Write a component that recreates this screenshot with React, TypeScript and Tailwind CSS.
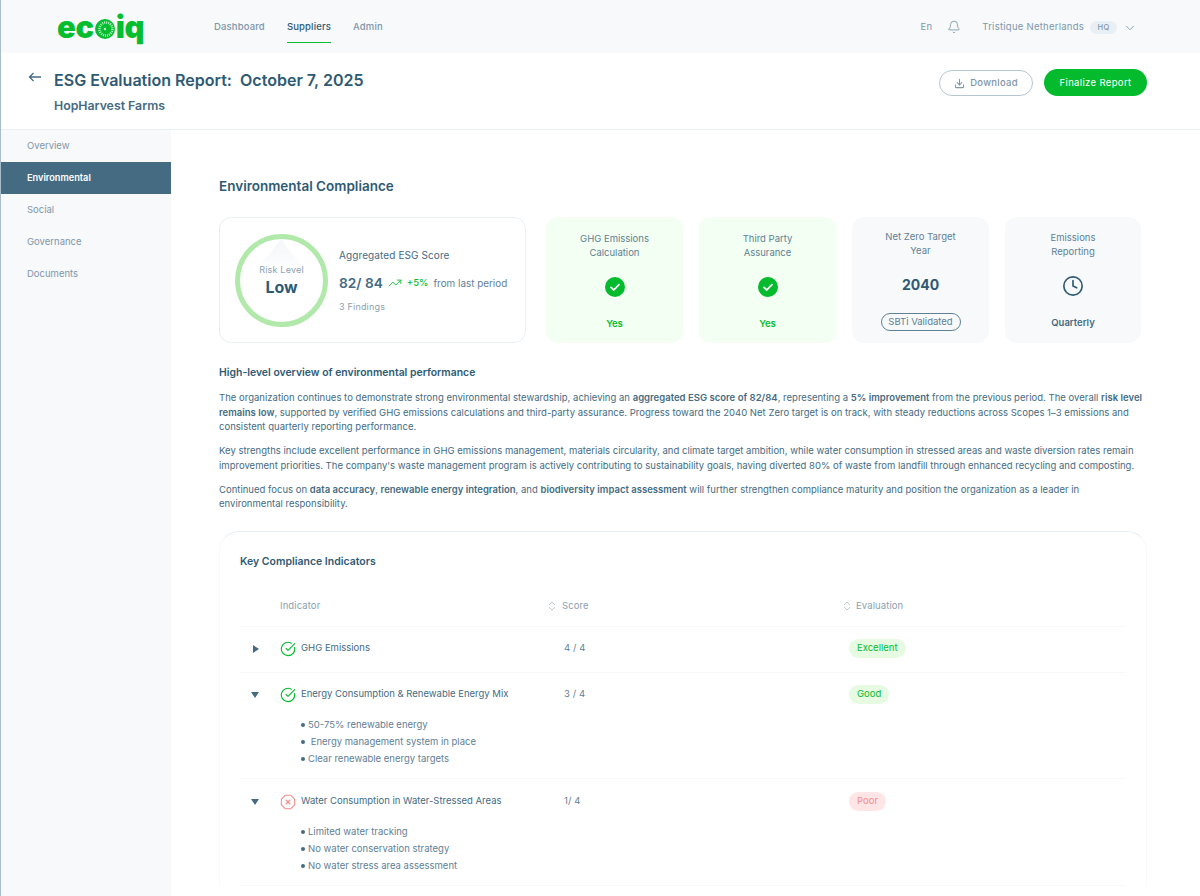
import {
  Bell,
  ChevronDown,
  ChevronsUpDown,
  CircleCheckBig,
  Clock,
  Download,
  OctagonX,
  TrendingUp,
} from "lucide-react";

const sideItems = ["Overview", "Environmental", "Social", "Governance", "Documents"];

function Logo() {
  return (
    <div className="flex items-center text-[31px] leading-none font-black tracking-[-0.4px] text-[#06bd30]">
      <span>ec</span>
      <svg width="20" height="20" viewBox="0 0 20 20" className="mt-[5px] ml-[1px]">
        <circle cx="10" cy="10" r="10" fill="#06bd30" />
        <circle cx="11" cy="10" r="6.5" fill="none" stroke="#b9efc5" strokeWidth="2.5" strokeDasharray="1 1" />
        <circle cx="10" cy="10" r="3.4" fill="#06bd30" />
        <circle cx="10" cy="10" r="1.2" fill="#bdf0c8" />
      </svg>
      <span className="ml-[1px]">iq</span>
    </div>
  );
}

function Header() {
  return (
    <header className="flex h-[53px] items-center bg-[#f7f9fb] pr-[63px] pl-[56px]">
      <div className="w-[157px]">
        <Logo />
      </div>
      <nav className="flex h-full items-center gap-[22px] pt-[2px] text-[9.5px] font-medium tracking-[0.15px] text-[#7f97a8]">
        <a>Dashboard</a>
        <a className="relative flex h-full items-center text-[#2f5a73]">
          Suppliers
          <span className="absolute right-0 bottom-[10px] left-0 h-[1.5px] bg-[#06bd30]" />
        </a>
        <a>Admin</a>
      </nav>
      <div className="ml-auto flex items-center pt-[2px] text-[9.5px] tracking-[0.25px] text-[#7f97a8]">
        <span>En</span>
        <Bell size={14} strokeWidth={1.5} className="mr-[21px] -mt-[2px] ml-[15px]" />
        <span>Tristique Netherlands</span>
        <span className="ml-[6px] flex h-[13px] w-[27px] items-center justify-center rounded-full bg-[#e8eff5] text-[7.5px] font-medium">
          HQ
        </span>
        <ChevronDown size={14} strokeWidth={1.5} className="ml-[6px]" />
      </div>
    </header>
  );
}

function TitleBar() {
  return (
    <div className="flex h-[77px] border-b border-[#e8eff5] bg-white pt-[16px] pr-[53px] pl-[27px]">
      <svg width="14" height="10" viewBox="0 0 14 10" className="mt-[3px] text-[#456b82]">
        <path d="M1.5 5H13M5.5 1 1.5 5l4 4" fill="none" stroke="currentColor" strokeWidth="1.3" />
      </svg>
      <div className="ml-[12px]">
        <h1 className="text-[16.05px] leading-[22px] font-semibold text-[#2f5a73]">
          ESG Evaluation Report:&nbsp; October 7, 2025
        </h1>
        <h2 className="mt-[7px] text-[12.3px] leading-[16px] font-semibold text-[#456b82]">
          HopHarvest Farms
        </h2>
      </div>
      <div className="ml-auto flex h-[27px] items-center gap-[11px]">
        <button className="flex h-[26px] w-[94px] items-center justify-center gap-[5px] rounded-full border border-[#b6c6d2] pt-[1px] text-[9.5px] font-medium tracking-[0.25px] text-[#7f97a8]">
          <Download size={11} strokeWidth={2.2} />
          Download
        </button>
        <button className="h-[27px] w-[103px] rounded-full bg-[#04bb2e] pt-[1px] text-[9.5px] tracking-[0.35px] text-white">
          Finalize Report
        </button>
      </div>
    </div>
  );
}

function Sidebar() {
  return (
    <aside className="w-[170px] shrink-0 bg-[#f7f9fb]">
      {sideItems.map((item) => (
        <div
          key={item}
          className={
            item === "Environmental"
              ? "flex h-[32px] items-center bg-[#456b82] pl-[26px] text-[9.2px] font-semibold text-white"
              : "flex h-[32px] items-center pl-[26px] text-[9.5px] text-[#7f97a8]"
          }
        >
          {item}
        </div>
      ))}
    </aside>
  );
}

function ScoreCard() {
  return (
    <div className="flex h-[126px] w-[307px] items-center rounded-xl border border-[#e8eff5] pl-[15px]">
      <div className="relative flex h-[93px] w-[93px] shrink-0 flex-col items-center justify-center rounded-full border-[5px] border-[#b1e9ab]">
        <svg width="40" height="26" viewBox="0 0 40 26" className="absolute top-0 left-[21px]">
          <defs>
            <linearGradient id="gauge" x1="0" y1="0" x2="0" y2="1">
              <stop offset="0" stopColor="#f4f6f9" />
              <stop offset="1" stopColor="#fbfcfd" />
            </linearGradient>
          </defs>
          <polygon points="20,0 40,26 0,26" fill="url(#gauge)" />
        </svg>
        <span className="relative mt-[1px] text-[9px] leading-[12px] tracking-[0.2px] text-[#8ba1b1]">Risk Level</span>
        <span className="relative mt-[1px] text-[16px] leading-[20px] font-bold text-[#2f5a73]">Low</span>
      </div>
      <div className="mt-[1px] ml-[11px]">
        <div className="text-[10px] leading-[14px] tracking-[0.1px] text-[#456b82]">Aggregated ESG Score</div>
        <div className="mt-[12px] flex items-center">
          <span className="text-[13.7px] leading-[18px] font-semibold text-[#456b82]">82/ 84</span>
          <TrendingUp size={14} strokeWidth={1.5} className="ml-[5px] text-[#06bd30]" />
          <span className="ml-[5px] text-[9.5px] font-medium text-[#06bd30]">+5%</span>
          <span className="ml-[5px] text-[9.9px] text-[#5f8095]">from last period</span>
        </div>
        <div className="mt-[9px] text-[9px] leading-[12px] tracking-[0.2px] text-[#8ba1b1]">3 Findings</div>
      </div>
    </div>
  );
}

function CheckDisc() {
  return (
    <svg width="20" height="20" viewBox="0 0 20 20">
      <circle cx="10" cy="10" r="10" fill="#04bb2e" />
      <path d="M6 10.4 8.8 13 14 7.6" fill="none" stroke="#fff" strokeWidth="1.8" strokeLinecap="round" strokeLinejoin="round" />
    </svg>
  );
}

function GreenCard({ title }: { title: string[] }) {
  return (
    <div className="flex h-[126px] w-[137px] flex-col items-center rounded-xl bg-[#f3fff2] pt-[15px]">
      <div className="text-center text-[9.5px] leading-[14px] text-[#5f8095]">
        {title[0]}
        <br />
        {title[1]}
      </div>
      <div className="mt-[17px]">
        <CheckDisc />
      </div>
      <div className="mt-[20px] text-[9.5px] font-semibold text-[#04bb2e]">Yes</div>
    </div>
  );
}

function CardRow() {
  return (
    <div className="mt-[22px] flex">
      <ScoreCard />
      <div className="ml-[20px] flex gap-[16px]">
        <GreenCard title={["GHG Emissions", "Calculation"]} />
        <GreenCard title={["Third Party", "Assurance"]} />
        <div className="flex h-[126px] w-[137px] flex-col items-center rounded-xl bg-[#f7f9fb] pt-[13px]">
          <div className="text-center text-[9.5px] leading-[14px] text-[#5f8095]">
            Net Zero Target
            <br />
            Year
          </div>
          <div className="mt-[18px] text-[14px] leading-[18px] font-bold text-[#2f5a73]">2040</div>
          <div className="mt-[19px] flex h-[18px] w-[80px] items-center justify-center rounded-full border border-[#5f8095] text-[9.5px] text-[#5f8095]">
            SBTi Validated
          </div>
        </div>
        <div className="flex h-[126px] w-[136px] flex-col items-center rounded-xl bg-[#f7f9fb] pt-[14px]">
          <div className="text-center text-[9.5px] leading-[14px] text-[#5f8095]">
            Emissions
            <br />
            Reporting
          </div>
          <Clock size={22} strokeWidth={1.8} className="mt-[16px] text-[#2f5a73]" />
          <div className="mt-[19px] text-[9.5px] font-semibold text-[#456b82]">Quarterly</div>
        </div>
      </div>
    </div>
  );
}

function Overview() {
  return (
    <section className="mt-[23px] w-[928px] text-[9.5px] leading-[14.5px] tracking-[0.015px] text-[#456b82]">
      <h3 className="text-[10.4px] leading-[14px] font-semibold text-[#2f5a73]">
        High-level overview of environmental performance
      </h3>
      <p className="mt-[11px]">
        The organization continues to demonstrate strong environmental stewardship, achieving an{" "}
        <b className="font-semibold">aggregated ESG score of 82/84</b>, representing a{" "}
        <b className="font-semibold">5% improvement</b> from the previous period. The overall{" "}
        <b className="font-semibold">risk level remains low</b>, supported by verified GHG emissions
        calculations and third-party assurance. Progress toward the 2040 Net Zero target is on track, with
        steady reductions across Scopes 1–3 emissions and consistent quarterly reporting performance.
      </p>
      <p className="mt-[9.5px]">
        Key strengths include excellent performance in GHG emissions management, materials circularity, and
        climate target ambition, while water consumption in stressed areas and waste diversion rates remain
        improvement priorities. The company's waste management program is actively contributing to
        sustainability goals, having diverted 80% of waste from landfill through enhanced recycling and
        composting.
      </p>
      <p className="mt-[9.5px]">
        Continued focus on <b className="font-semibold">data accuracy</b>,{" "}
        <b className="font-semibold">renewable energy integration</b>, and{" "}
        <b className="font-semibold">biodiversity impact assessment</b> will further strengthen compliance
        maturity and position the organization as a leader in
        <br />
        environmental responsibility.
      </p>
    </section>
  );
}

function Caret({ open }: { open: boolean }) {
  return (
    <svg width="8" height="8" viewBox="0 0 8 8" className="ml-[11px]">
      <polygon points={open ? "0,1 8,1 4,7" : "2,0 8,4 2,8"} fill="#456b82" />
    </svg>
  );
}

interface IndicatorProps {
  name: string;
  score: string;
  grade: string;
  bad?: boolean;
  open?: boolean;
  bullets?: string[];
}

function Indicator(props: IndicatorProps) {
  return (
    <div className={props.bad ? "border-b border-[#f8f9fb] pt-[1px]" : "border-b border-[#f8f9fb]"}>
      <div className="grid h-[44px] grid-cols-[40px_265px_296px_1fr] items-center">
        <Caret open={!!props.open} />
        <div className="flex items-center gap-[5px] text-[9.5px] text-[#456b82]">
          {props.bad ? (
            <OctagonX size={16} strokeWidth={1.6} className="text-[#f58b8b]" />
          ) : (
            <CircleCheckBig size={16} strokeWidth={1.7} className="text-[#04bb2e]" />
          )}
          {props.name}
        </div>
        <div className="pl-[19px] text-[9.5px] tracking-[0.1px] text-[#5f8095]">{props.score}</div>
        <div className="flex pl-[8px]">
          <span
            className={
              props.bad
                ? "flex h-[19px] items-center rounded-full bg-[#ffe5e6] px-[8px] text-[9.5px] text-[#f58b8b]"
                : "flex h-[19px] items-center rounded-full bg-[#e7fbe3] px-[8px] text-[9.5px] text-[#04bb2e]"
            }
          >
            {props.grade}
          </span>
        </div>
      </div>
      {props.bullets ? (
        <ul className="mb-[12px] ml-[61px] flex flex-col gap-[3px] pt-[1px] text-[9.5px] leading-[14px] text-[#5f8095]">
          {props.bullets.map((b) => (
            <li key={b} className="flex items-center gap-[3px] whitespace-pre">
              <span className="h-[4px] w-[4px] rounded-full bg-[#456b82]" />
              {b}
            </li>
          ))}
        </ul>
      ) : (
        <div className="h-[1px]" />
      )}
    </div>
  );
}

function Indicators() {
  return (
    <section className="mt-[19px] w-[928px] rounded-t-[20px] border border-b-0 border-[#f8f9fb] border-t-[#e8eff5] px-[20px] pt-[23px]">
      <h3 className="text-[10.5px] leading-[14px] font-semibold text-[#2f5a73]">Key Compliance Indicators</h3>
      <div className="mt-[27px] grid h-[31px] grid-cols-[40px_265px_296px_1fr] items-start border-b border-[#f8f9fb] pt-[3px] text-[9.5px] leading-[14px] tracking-[0.1px] text-[#8ba1b1]">
        <span />
        <span>Indicator</span>
        <span className="flex items-center gap-[4px] pl-[1px]">
          <ChevronsUpDown size={12} strokeWidth={1.2} />
          Score
        </span>
        <span className="flex items-center gap-[3px]">
          <ChevronsUpDown size={12} strokeWidth={1.2} />
          Evaluation
        </span>
      </div>
      <Indicator name="GHG Emissions" score="4 / 4" grade="Excellent" />
      <Indicator
        name="Energy Consumption & Renewable Energy Mix"
        score="3 / 4"
        grade="Good"
        open
        bullets={["50-75% renewable energy", " Energy management system in place", "Clear renewable energy targets"]}
      />
      <Indicator
        name="Water Consumption in Water-Stressed Areas"
        score="1/ 4"
        grade="Poor"
        bad
        open
        bullets={["Limited water tracking", "No water conservation strategy", "No water stress area assessment"]}
      />
    </section>
  );
}

export default function App() {
  return (
    <div className="flex h-[896px] w-[1200px] flex-col overflow-hidden border-l border-[#a9bccb] bg-white font-['Inter',sans-serif]">
      <Header />
      <TitleBar />
      <div className="flex min-h-0 flex-1">
        <Sidebar />
        <main className="min-w-0 flex-1 pt-[47px] pl-[48px]">
          <h2 className="text-[13.5px] leading-[18px] font-semibold text-[#2f5a73]">Environmental Compliance</h2>
          <CardRow />
          <Overview />
          <Indicators />
        </main>
      </div>
    </div>
  );
}
